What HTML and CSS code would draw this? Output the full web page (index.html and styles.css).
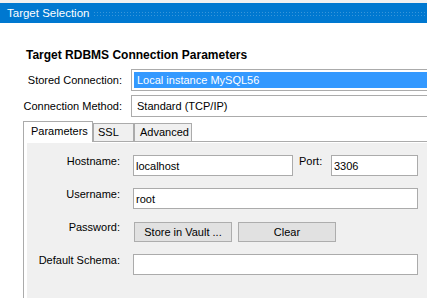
FILE: index.html
```html
<!DOCTYPE html>
<html lang="en">
<head>
    <meta charset="UTF-8">
    <meta name="viewport" content="width=device-width, initial-scale=1.0">
    <title>Target Selection</title>
    <link rel="stylesheet" href="styles.css">
</head>
<body>
    <!-- Wizard page title -->
    <div class="titlebar">
        <span class="title">Target Selection</span>
        <span class="grip"></span>
    </div>

    <div class="page">
        <h1 class="heading">Target RDBMS Connection Parameters</h1>

        <!-- Connection pickers -->
        <div class="conn-grid">
            <label class="conn-label">Stored Connection:</label>
            <div class="combo"><span class="combo-sel">Local instance MySQL56</span></div>
            <label class="conn-label">Connection Method:</label>
            <div class="combo"><span class="combo-text">Standard (TCP/IP)</span></div>
        </div>

        <!-- Tabs -->
        <div class="tabs">
            <div class="tab tab-params active">Parameters</div>
            <div class="tab tab-ssl">SSL</div>
            <div class="tab tab-adv">Advanced</div>
        </div>

        <div class="tab-panel">
            <div class="panel-body">
                <div class="param-grid">
                    <label class="param-label">Hostname:</label>
                    <div class="host-row">
                        <input class="field host-field" type="text" value="localhost">
                        <label class="port-label">Port:</label>
                        <input class="field port-field" type="text" value="3306">
                    </div>

                    <label class="param-label">Username:</label>
                    <input class="field" type="text" value="root">

                    <label class="param-label">Password:</label>
                    <div class="button-row">
                        <button class="btn">Store in Vault ...</button>
                        <button class="btn">Clear</button>
                    </div>

                    <label class="param-label">Default Schema:</label>
                    <input class="field" type="text" value="">
                </div>
            </div>
        </div>
    </div>
</body>
</html>
```

FILE: styles.css
```css
/* General Styles */
body {
    font-family: "Liberation Sans", Arial, sans-serif;
    font-size: 11px;
    margin: 0;
    padding: 0;
    background-color: #fff;
    color: #000;
    overflow: hidden;
}

/* Title bar */
.titlebar {
    display: flex;
    align-items: center;
    height: 20px;
    border-top: 3px solid #f0f0f0;
    background-color: #0078d0;
    color: #fff;
    padding-left: 7px;
    font-size: 11.5px;
}

.grip {
    flex: 1;
    height: 6px;
    margin-left: 4px;
    margin-top: 1px;
    background-image: radial-gradient(circle, rgba(255, 255, 255, 0.22) 0.6px, transparent 0.8px);
    background-size: 3px 3px;
}

/* Page */
.page {
    padding-left: 23px;
}

.heading {
    margin: 25px 0 0 3px;
    font-size: 12px;
    line-height: 14px;
    font-weight: bold;
}

/* Connection rows */
.conn-grid {
    display: grid;
    grid-template-columns: 99px 296px;
    column-gap: 9px;
    row-gap: 4px;
    margin-top: 7px;
}

.conn-label {
    text-align: right;
    align-self: center;
}

.combo {
    height: 22px;
    box-sizing: border-box;
    border: 1px solid #ababab;
    border-right: none;
    background-color: #fff;
    padding: 2px 0 2px 2px;
}

.combo-sel {
    display: block;
    height: 16px;
    line-height: 16px;
    padding-left: 3px;
    background-color: #3399ff;
    color: #fff;
}

.combo-text {
    display: block;
    line-height: 16px;
    padding-left: 3px;
}

/* Tabs */
.tabs {
    display: flex;
    align-items: flex-end;
    margin-top: 4px;
    height: 20px;
}

.tab {
    box-sizing: border-box;
    height: 18px;
    line-height: 16px;
    border: 1px solid #ababab;
    border-bottom: none;
    background-color: #f0f0f0;
    padding-left: 4px;
}

.tab.active {
    position: relative;
    height: 21px;
    margin-bottom: -1px;
    line-height: 18px;
    background-color: #fff;
    padding-left: 7px;
}

.tab-params {
    width: 70px;
}

.tab-ssl {
    width: 41px;
}

.tab-adv {
    width: 58px;
    padding-left: 5px;
}

.tab-panel {
    box-sizing: border-box;
    width: 404px;
    height: 157px;
    border: 1px solid #ababab;
    border-right: none;
    border-bottom: none;
    background-color: #fff;
    padding: 1px 0 0 3px;
}

.panel-body {
    height: 100%;
    background-color: #f0f0f0;
    padding-top: 12px;
    box-sizing: border-box;
}

/* Parameter form */
.param-grid {
    display: grid;
    grid-template-columns: 93px 285px;
    column-gap: 13px;
    row-gap: 12px;
}

.param-label {
    text-align: right;
    align-self: start;
    line-height: 13px;
}

.host-row {
    display: flex;
    align-items: flex-start;
}

.field {
    box-sizing: border-box;
    height: 21px;
    border: 1px solid #ababab;
    background-color: #fff;
    padding: 0 0 0 2px;
    margin: 0;
    font-family: inherit;
    font-size: 11px;
    color: #000;
    outline: none;
}

.host-field {
    width: 160px;
}

.port-label {
    margin-left: 6px;
    line-height: 13px;
}

.port-field {
    width: 87px;
    margin-left: auto;
}

.button-row {
    display: flex;
    gap: 6px;
    margin-top: 1px;
    padding-left: 1px;
}

.btn {
    width: 98px;
    height: 20px;
    border: 1px solid #adadad;
    background-color: #e1e1e1;
    font-family: inherit;
    font-size: 11px;
    color: #000;
    padding: 0;
}
```
